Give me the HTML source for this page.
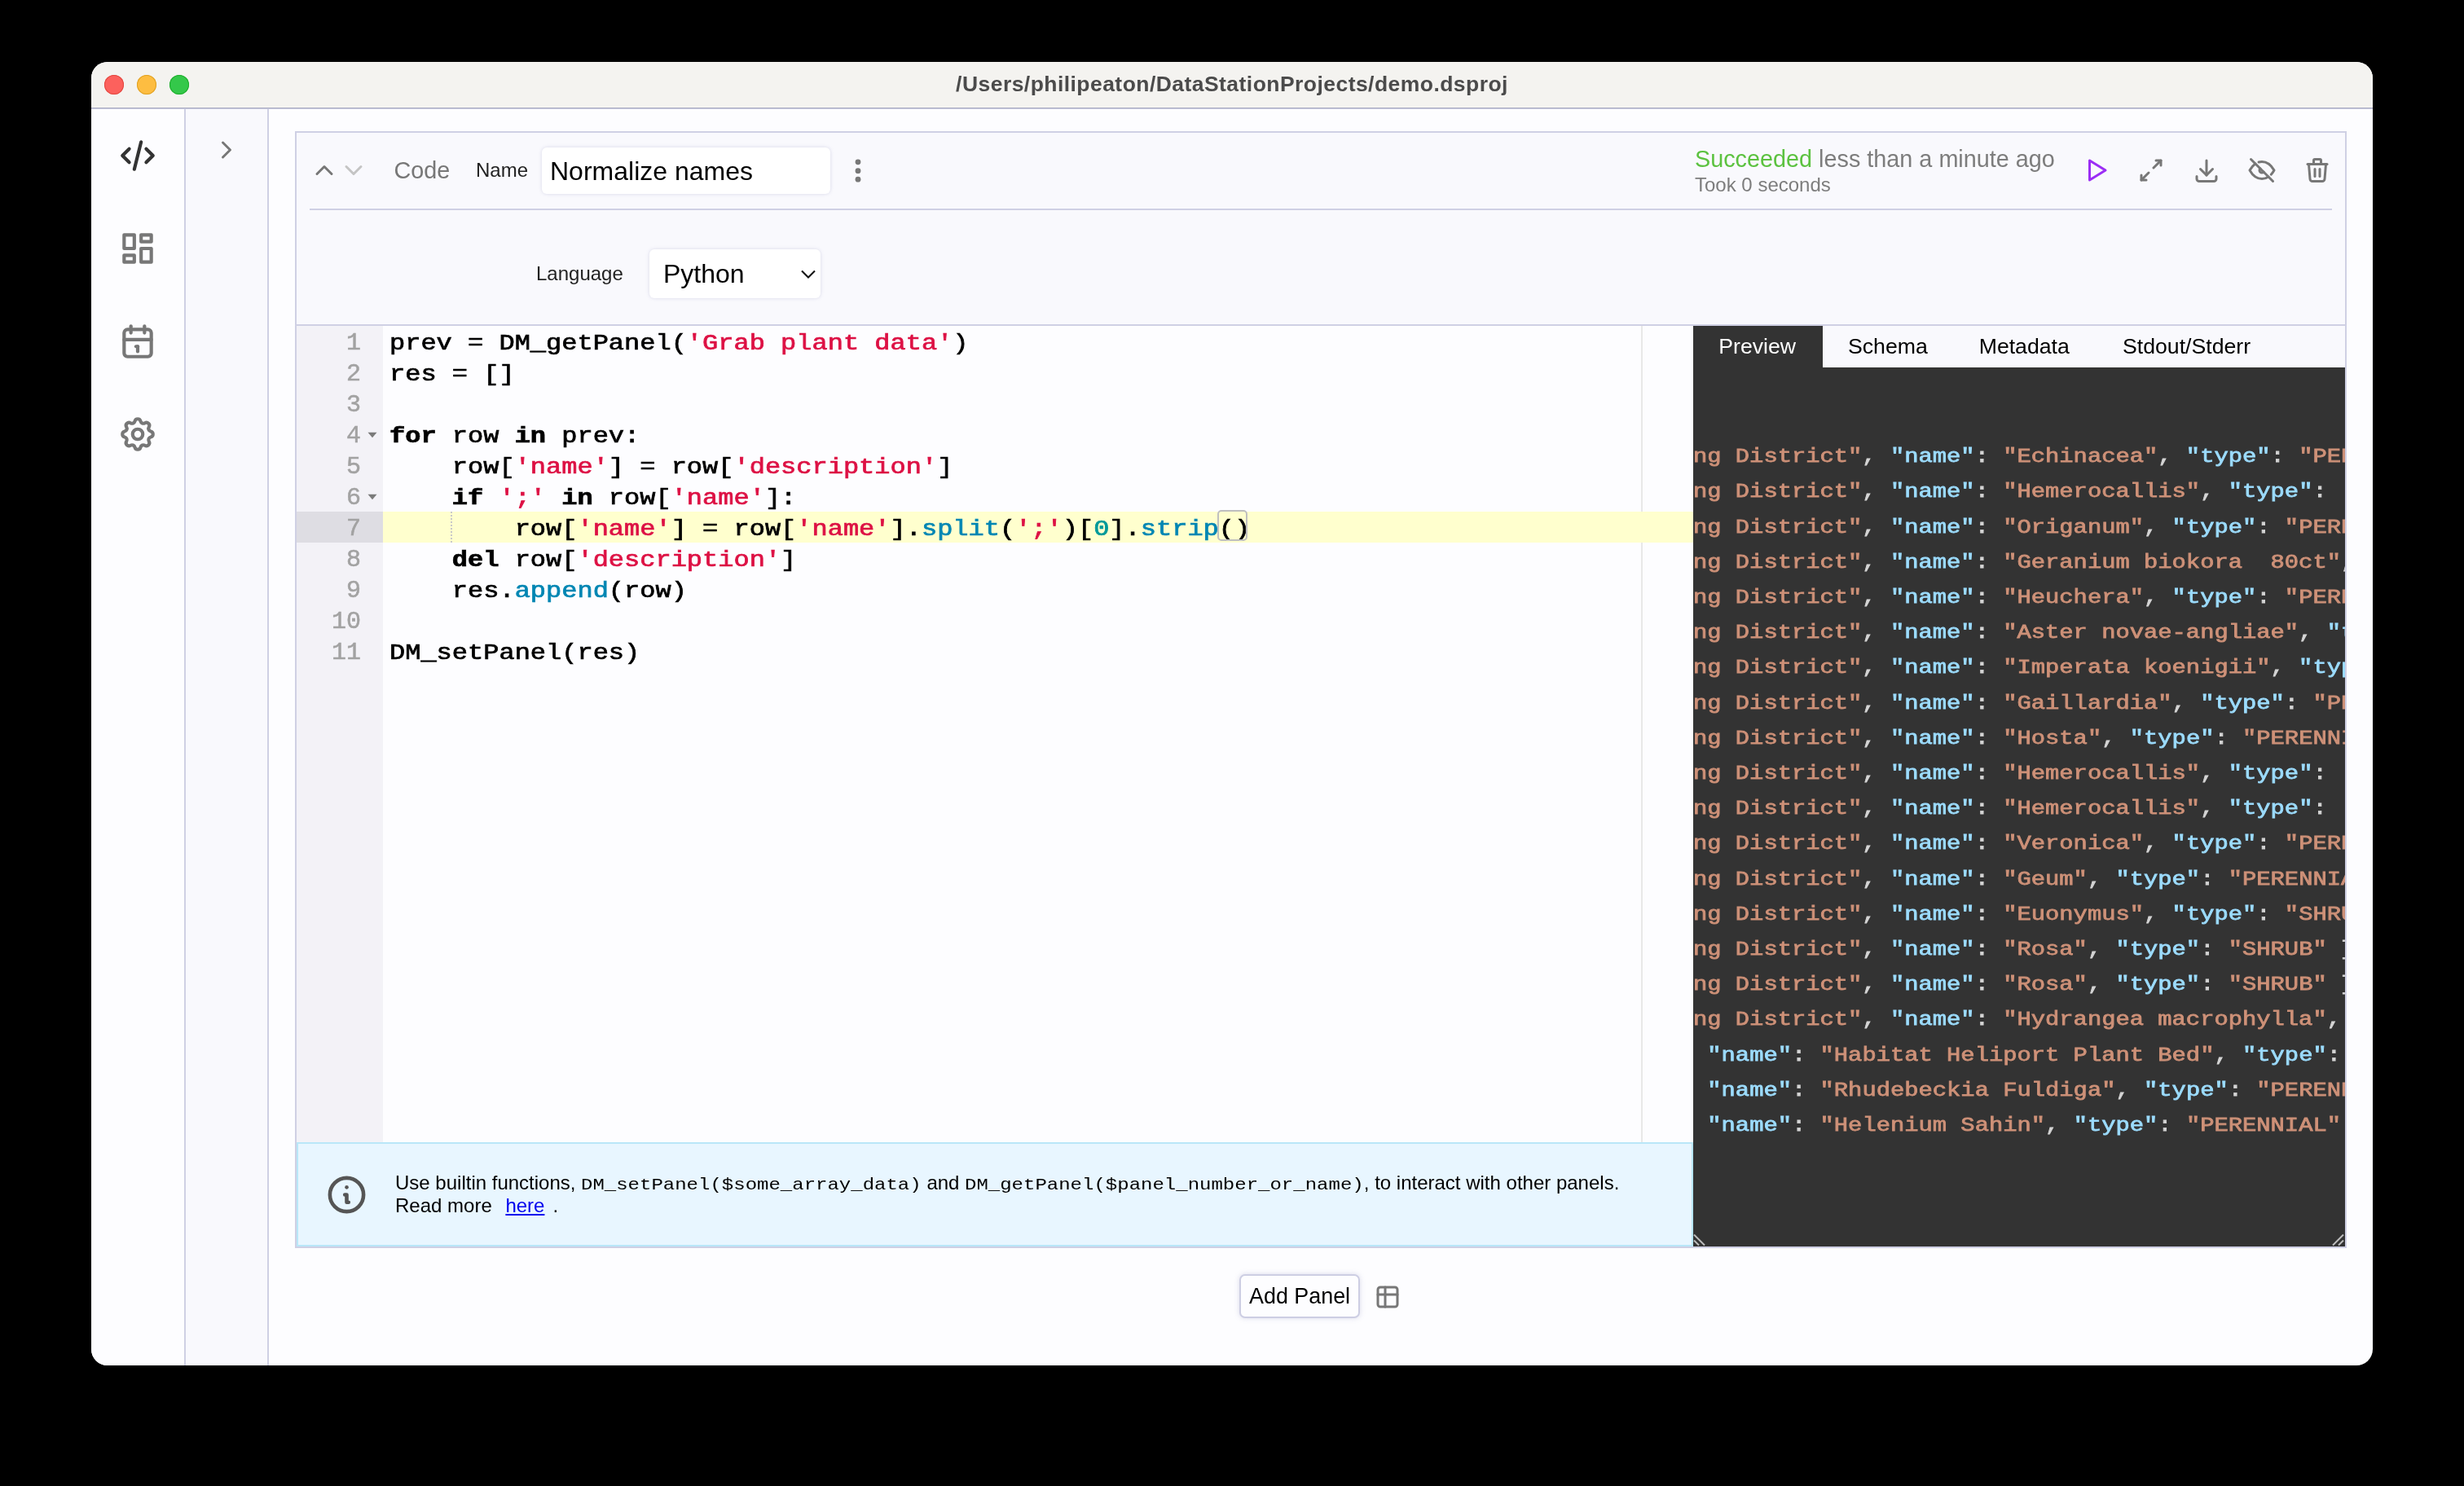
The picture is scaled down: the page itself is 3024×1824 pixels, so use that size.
<!DOCTYPE html>
<html>
<head>
<meta charset="utf-8">
<title>DataStation</title>
<style>
*{box-sizing:border-box;margin:0;padding:0}
html,body{width:3024px;height:1824px;background:#000;overflow:hidden}
body{position:relative;font-family:"Liberation Sans",sans-serif;color:#000}
.abs{position:absolute}
#win{will-change:transform;position:absolute;left:112px;top:76px;width:2800px;height:1600px;border-radius:20px;overflow:hidden;background:#fdfdff}
/* everything inside #page uses page coordinates */
#page{position:absolute;left:-112px;top:-76px;width:3024px;height:1824px}
#titlebar{left:112px;top:76px;width:2800px;height:56px;background:#f4f3f0}
#tb1{left:112px;top:131px;width:2800px;height:1px;background:#f8f7f3}
#tb2{left:112px;top:132px;width:2800px;height:1px;background:#a9abc1}
#tb3{left:112px;top:133px;width:2800px;height:1px;background:#c9cadf}
.tl{width:24px;height:24px;border-radius:50%;top:92px}
#title{left:112px;width:2800px;top:84.5px;height:36px;line-height:36px;text-align:center;font-weight:bold;font-size:26.5px;letter-spacing:0.45px;color:#4b4b4b}
#sidebar{left:112px;top:134px;width:114px;height:1542px;background:#fdfdff}
#sb-border{left:226px;top:134px;width:2px;height:1542px;background:#cfd0e4}
#col2{left:228px;top:134px;width:100px;height:1542px;background:#f9f9fd}
#col2-border{left:328px;top:134px;width:2px;height:1542px;background:#cfd0e4}
svg.ti{position:absolute;fill:none;stroke-width:2;stroke-linecap:round;stroke-linejoin:round}
#panel{left:362px;top:161px;width:2518px;height:1371px;border:2px solid #cfd0e4;background:#f9f9fd}
#hdrline{left:380px;top:256px;width:2482px;height:2px;background:#cfd0e4}
.sans{font-family:"Liberation Sans",sans-serif}
.mono{font-family:"Liberation Mono",monospace}

.ln{left:366px;width:77px;height:38px;line-height:38px;margin-top:2px;-webkit-text-stroke:0.5px;text-align:right;font-family:"Liberation Mono",monospace;font-size:30px;color:#a2a2a2}
.cl{left:478px;height:38px;line-height:38px;margin-top:3px;white-space:pre;font-family:"Liberation Mono",monospace;font-size:27px;transform:scaleX(1.18519);transform-origin:0 0;-webkit-text-stroke:0.7px;color:#000}
.cl .s{color:#dd1144}.cl .f{color:#0086b3}.cl .n{color:#009999}.cl b{font-weight:bold}
.tab{top:406.7px;height:36px;line-height:36px;font-size:26.67px;white-space:nowrap}
.pl{left:0;height:43.2px;line-height:43.2px;white-space:pre;font-family:"Liberation Mono",monospace;font-size:24.3px;transform:scaleX(1.18519);transform-origin:0 0;-webkit-text-stroke:0.8px;color:#d4d4d4}
.pl .ps{color:#ce9178}.pl .pk{color:#9cdcfe}
#infotxt code{font-family:"Liberation Mono",monospace;font-size:20.25px;line-height:20px;display:inline-block;transform:scaleX(1.18519);transform-origin:0 50%}
.lnk{color:#0000ee;text-decoration:underline;margin:0 10px 0 10px}
</style>
</head>
<body>
<div id="win"><div id="page">

<!-- TITLE BAR -->
<div id="titlebar" class="abs"></div>
<div id="tb1" class="abs"></div><div id="tb2" class="abs"></div><div id="tb3" class="abs"></div>
<div class="abs tl" style="left:128px;background:#fc615d;box-shadow:inset 0 0 0 1px #e2463f"></div>
<div class="abs tl" style="left:168px;background:#fdbd41;box-shadow:inset 0 0 0 1px #dfa123"></div>
<div class="abs tl" style="left:208px;background:#34c84a;box-shadow:inset 0 0 0 1px #1dad2b"></div>
<div id="title" class="abs">/Users/philipeaton/DataStationProjects/demo.dsproj</div>

<!-- SIDEBAR -->
<div id="sidebar" class="abs"></div>
<div id="sb-border" class="abs"></div>
<div id="col2" class="abs"></div>
<div id="col2-border" class="abs"></div>

<!-- PANEL -->
<div id="panel" class="abs"></div>
<div id="hdrline" class="abs"></div>

<!-- SIDEBAR ICONS -->
<svg class="ti" style="left:144px;top:166px;stroke:#333" width="50" height="50" viewBox="0 0 24 24"><path d="M7 8l-4 4l4 4"/><path d="M17 8l4 4l-4 4"/><path d="M14 4l-4 16"/></svg>
<svg class="ti" style="left:144px;top:280px;stroke:#777" width="50" height="50" viewBox="0 0 24 24"><path d="M4 4h6v8h-6z"/><path d="M4 16h6v4h-6z"/><path d="M14 12h6v8h-6z"/><path d="M14 4h6v4h-6z"/></svg>
<svg class="ti" style="left:144px;top:394px;stroke:#777" width="50" height="50" viewBox="0 0 24 24"><rect x="4" y="5" width="16" height="16" rx="2"/><path d="M16 3v4"/><path d="M8 3v4"/><path d="M4 11h16"/><path d="M11 15h1"/><path d="M12 15v3"/></svg>
<svg class="ti" style="left:144px;top:508px;stroke:#777" width="50" height="50" viewBox="0 0 24 24"><path d="M10.325 4.317c.426 -1.756 2.924 -1.756 3.35 0a1.724 1.724 0 0 0 2.573 1.066c1.543 -.94 3.31 .826 2.37 2.37a1.724 1.724 0 0 0 1.065 2.572c1.756 .426 1.756 2.924 0 3.35a1.724 1.724 0 0 0 -1.066 2.573c.94 1.543 -.826 3.31 -2.37 2.37a1.724 1.724 0 0 0 -2.572 1.065c-.426 1.756 -2.924 1.756 -3.35 0a1.724 1.724 0 0 0 -2.573 -1.066c-1.543 .94 -3.31 -.826 -2.37 -2.37a1.724 1.724 0 0 0 -1.065 -2.572c-1.756 -.426 -1.756 -2.924 0 -3.35a1.724 1.724 0 0 0 1.066 -2.573c-.94 -1.543 .826 -3.31 2.37 -2.37c1 .608 2.296 .07 2.572 -1.065z"/><circle cx="12" cy="12" r="3"/></svg>
<svg class="ti" style="left:260px;top:166px;stroke:#777" width="36" height="36" viewBox="0 0 24 24"><path d="M9 6l6 6l-6 6"/></svg>

<!-- PANEL HEADER LEFT -->
<svg class="ti" style="left:380px;top:191px;stroke:#777" width="36" height="36" viewBox="0 0 24 24"><path d="M6 15l6 -6l6 6"/></svg>
<svg class="ti" style="left:416px;top:191px;stroke:#c4c4c4" width="36" height="36" viewBox="0 0 24 24"><path d="M6 9l6 6l6 -6"/></svg>
<div class="abs" id="lblCode" style="left:483.5px;top:191px;height:36px;line-height:36px;font-size:28.8px;color:#777">Code</div>
<div class="abs" id="lblName" style="left:584px;top:191px;height:36px;line-height:36px;font-size:24px;color:#222">Name</div>
<div class="abs" id="inpName" style="left:665px;top:181px;width:354px;height:57px;background:#fff;border-radius:6px;box-shadow:0 0 4px rgba(120,120,170,.25)"></div>
<div class="abs" id="txtName" style="left:675px;top:191px;height:38px;line-height:38px;font-size:32px;color:#000">Normalize names</div>
<svg class="abs" style="left:1046px;top:192px" width="14" height="36" viewBox="0 0 14 36"><circle cx="7" cy="6.8" r="3.4" fill="#777"/><circle cx="7" cy="17.7" r="3.4" fill="#777"/><circle cx="7" cy="28.2" r="3.4" fill="#777"/></svg>

<!-- PANEL HEADER RIGHT -->
<div class="abs" id="status" style="left:2080px;top:177px;height:36px;line-height:36px;font-size:28.8px;color:#7d7d7d;white-space:nowrap"><span style="color:#5cc240">Succeeded</span> less than a minute ago</div>
<div class="abs" id="took" style="left:2080px;top:212.5px;height:28px;line-height:28px;font-size:24px;color:#7d7d7d;white-space:nowrap">Took 0 seconds</div>
<svg class="ti" style="left:2554px;top:191px;stroke:#9b2df5" width="36" height="36" viewBox="0 0 24 24"><path d="M7 4v16l13 -8z"/></svg>
<svg class="ti" style="left:2622px;top:191px;stroke:#777" width="36" height="36" viewBox="0 0 24 24"><path d="M16 4h4v4"/><path d="M14 10l6 -6"/><path d="M8 20h-4v-4"/><path d="M4 20l6 -6"/></svg>
<svg class="ti" style="left:2690px;top:191px;stroke:#777" width="36" height="36" viewBox="0 0 24 24"><path d="M4 17v2a2 2 0 0 0 2 2h12a2 2 0 0 0 2 -2v-2"/><path d="M7 11l5 5l5 -5"/><path d="M12 4v12"/></svg>
<svg class="ti" style="left:2758px;top:191px;stroke:#777" width="36" height="36" viewBox="0 0 24 24"><path d="M3 3l18 18"/><path d="M10.584 10.587a2 2 0 0 0 2.828 2.83"/><path d="M9.363 5.365a9.466 9.466 0 0 1 2.637 -.365c4 0 7.333 2.333 10 7c-.778 1.361 -1.612 2.524 -2.503 3.488m-2.14 1.861c-1.631 1.1 -3.415 1.651 -5.357 1.651c-4 0 -7.333 -2.333 -10 -7c1.369 -2.395 2.913 -4.175 4.632 -5.341"/></svg>
<svg class="ti" style="left:2826px;top:191px;stroke:#777" width="36" height="36" viewBox="0 0 24 24"><path d="M4 7h16"/><path d="M10 11v6"/><path d="M14 11v6"/><path d="M5 7l1 12a2 2 0 0 0 2 2h8a2 2 0 0 0 2 -2l1 -12"/><path d="M9 7v-3a1 1 0 0 1 1 -1h4a1 1 0 0 1 1 1v3"/></svg>

<!-- LANGUAGE ROW -->
<div class="abs" id="lblLang" style="left:658px;top:317.5px;height:36px;line-height:36px;font-size:24px;color:#222">Language</div>
<div class="abs" id="selLang" style="left:797px;top:306px;width:210px;height:60px;background:#fff;border-radius:6px;box-shadow:0 0 4px rgba(120,120,170,.25)"></div>
<div class="abs" id="txtLang" style="left:814px;top:317px;height:38px;line-height:38px;font-size:32px;color:#000">Python</div>
<svg class="abs" style="left:980px;top:326px;fill:none;stroke:#111;stroke-width:2.1;stroke-linecap:butt;stroke-linejoin:miter" width="24" height="20" viewBox="0 0 24 20"><path d="M4 6.5l8 8l8 -8"/></svg>
<!-- EDITOR -->
<div class="abs" id="edtop" style="left:364px;top:398px;width:2514px;height:2px;background:#cfd0e4"></div>
<div class="abs" id="edbg" style="left:470px;top:400px;width:1608px;height:1002px;background:#fdfdff"></div>
<div class="abs" id="gutter" style="left:364px;top:400px;width:106px;height:1002px;background:#f3f2f7"></div>
<div class="abs" id="actg" style="left:364px;top:628px;width:106px;height:38px;background:#dedde3"></div>
<div class="abs" id="actl" style="left:470px;top:628px;width:1608px;height:38px;background:#ffffce"></div>
<div class="abs" id="pmargin" style="left:2014px;top:400px;width:2px;height:1002px;background:#e8e8e8"></div>
<div class="abs" id="actl2" style="left:2014px;top:628px;width:64px;height:38px;background:#ffffce"></div>
<div class="abs ln" style="top:400px">1</div>
<div class="abs ln" style="top:438px">2</div>
<div class="abs ln" style="top:476px">3</div>
<div class="abs ln" style="top:514px">4</div>
<div class="abs ln" style="top:552px">5</div>
<div class="abs ln" style="top:590px">6</div>
<div class="abs ln" style="top:628px">7</div>
<div class="abs ln" style="top:666px">8</div>
<div class="abs ln" style="top:704px">9</div>
<div class="abs ln" style="top:742px">10</div>
<div class="abs ln" style="top:780px">11</div>
<svg class="abs" style="left:451px;top:530px" width="12" height="8" viewBox="0 0 12 8"><path d="M0.5 0.8h11l-5.5 6.4z" fill="#7a7a7a"/></svg>
<svg class="abs" style="left:451px;top:606px" width="12" height="8" viewBox="0 0 12 8"><path d="M0.5 0.8h11l-5.5 6.4z" fill="#7a7a7a"/></svg>
<div class="abs cl" style="top:400px">prev = DM_getPanel(<span class="s">&#x27;Grab plant data&#x27;</span>)</div>
<div class="abs cl" style="top:438px">res = []</div>
<div class="abs cl" style="top:476px"></div>
<div class="abs cl" style="top:514px"><b>for</b> row <b>in</b> prev:</div>
<div class="abs cl" style="top:552px">    row[<span class="s">&#x27;name&#x27;</span>] = row[<span class="s">&#x27;description&#x27;</span>]</div>
<div class="abs cl" style="top:590px">    <b>if</b> <span class="s">&#x27;;&#x27;</span> <b>in</b> row[<span class="s">&#x27;name&#x27;</span>]:</div>
<div class="abs cl" style="top:628px">        row[<span class="s">&#x27;name&#x27;</span>] = row[<span class="s">&#x27;name&#x27;</span>].<span class="f">split</span>(<span class="s">&#x27;;&#x27;</span>)[<span class="n">0</span>].<span class="f">strip</span>()</div>
<div class="abs cl" style="top:666px">    <b>del</b> row[<span class="s">&#x27;description&#x27;</span>]</div>
<div class="abs cl" style="top:704px">    res.<span class="f">append</span>(row)</div>
<div class="abs cl" style="top:742px"></div>
<div class="abs cl" style="top:780px">DM_setPanel(res)</div>
<div class="abs" style="left:553px;top:628px;width:2px;height:38px;background:repeating-linear-gradient(to bottom,#c9c9c9 0 2px,transparent 2px 4px)"></div>
<div class="abs" style="left:1494px;top:626px;width:37px;height:38px;border:2px solid #bfbfbf;border-radius:5px"></div>
<!-- PREVIEW -->
<div class="abs" id="tabsbg" style="left:2078px;top:400px;width:800px;height:51px;background:#f9f9fd"></div>
<div class="abs" id="pvbg" style="left:2078px;top:451px;width:800px;height:1079px;background:#333"></div>
<div class="abs" id="tabact" style="left:2078px;top:400px;width:159px;height:52px;background:#333"></div>
<div class="abs tab" style="left:2109.3px;color:#fff">Preview</div>
<div class="abs tab" style="left:2268px;color:#000">Schema</div>
<div class="abs tab" style="left:2428.7px;color:#000">Metadata</div>
<div class="abs tab" style="left:2605px;color:#000">Stdout/Stderr</div>
<div class="abs" id="pvclip" style="left:2078px;top:451px;width:800px;height:1079px;overflow:hidden">
<div class="abs pl" style="top:88.1px"><span class="ps">ng District&quot;</span>, <span class="pk">&quot;name&quot;</span>: <span class="ps">&quot;Echinacea&quot;</span>, <span class="pk">&quot;type&quot;</span>: <span class="ps">&quot;PERENNIAL&quot;</span></div>
<div class="abs pl" style="top:131.3px"><span class="ps">ng District&quot;</span>, <span class="pk">&quot;name&quot;</span>: <span class="ps">&quot;Hemerocallis&quot;</span>, <span class="pk">&quot;type&quot;</span>:   <span class="ps">&quot;PERENNIAL&quot;</span></div>
<div class="abs pl" style="top:174.5px"><span class="ps">ng District&quot;</span>, <span class="pk">&quot;name&quot;</span>: <span class="ps">&quot;Origanum&quot;</span>, <span class="pk">&quot;type&quot;</span>: <span class="ps">&quot;PERENNIAL&quot;</span></div>
<div class="abs pl" style="top:217.7px"><span class="ps">ng District&quot;</span>, <span class="pk">&quot;name&quot;</span>: <span class="ps">&quot;Geranium biokora  80ct&quot;</span>, <span class="pk">&quot;type&quot;</span>: <span class="ps">&quot;PERENNIAL&quot;</span></div>
<div class="abs pl" style="top:260.9px"><span class="ps">ng District&quot;</span>, <span class="pk">&quot;name&quot;</span>: <span class="ps">&quot;Heuchera&quot;</span>, <span class="pk">&quot;type&quot;</span>: <span class="ps">&quot;PERENNIAL&quot;</span></div>
<div class="abs pl" style="top:304.1px"><span class="ps">ng District&quot;</span>, <span class="pk">&quot;name&quot;</span>: <span class="ps">&quot;Aster novae-angliae&quot;</span>, <span class="pk">&quot;type&quot;</span>: <span class="ps">&quot;PERENNIAL&quot;</span></div>
<div class="abs pl" style="top:347.3px"><span class="ps">ng District&quot;</span>, <span class="pk">&quot;name&quot;</span>: <span class="ps">&quot;Imperata koenigii&quot;</span>, <span class="pk">&quot;type&quot;</span>: <span class="ps">&quot;PERENNIAL&quot;</span></div>
<div class="abs pl" style="top:390.5px"><span class="ps">ng District&quot;</span>, <span class="pk">&quot;name&quot;</span>: <span class="ps">&quot;Gaillardia&quot;</span>, <span class="pk">&quot;type&quot;</span>: <span class="ps">&quot;PERENNIAL&quot;</span></div>
<div class="abs pl" style="top:433.7px"><span class="ps">ng District&quot;</span>, <span class="pk">&quot;name&quot;</span>: <span class="ps">&quot;Hosta&quot;</span>, <span class="pk">&quot;type&quot;</span>: <span class="ps">&quot;PERENNIAL&quot;</span></div>
<div class="abs pl" style="top:476.9px"><span class="ps">ng District&quot;</span>, <span class="pk">&quot;name&quot;</span>: <span class="ps">&quot;Hemerocallis&quot;</span>, <span class="pk">&quot;type&quot;</span>:   <span class="ps">&quot;PERENNIAL&quot;</span></div>
<div class="abs pl" style="top:520.1px"><span class="ps">ng District&quot;</span>, <span class="pk">&quot;name&quot;</span>: <span class="ps">&quot;Hemerocallis&quot;</span>, <span class="pk">&quot;type&quot;</span>:   <span class="ps">&quot;PERENNIAL&quot;</span></div>
<div class="abs pl" style="top:563.3px"><span class="ps">ng District&quot;</span>, <span class="pk">&quot;name&quot;</span>: <span class="ps">&quot;Veronica&quot;</span>, <span class="pk">&quot;type&quot;</span>: <span class="ps">&quot;PERENNIAL&quot;</span></div>
<div class="abs pl" style="top:606.5px"><span class="ps">ng District&quot;</span>, <span class="pk">&quot;name&quot;</span>: <span class="ps">&quot;Geum&quot;</span>, <span class="pk">&quot;type&quot;</span>: <span class="ps">&quot;PERENNIAL&quot;</span></div>
<div class="abs pl" style="top:649.7px"><span class="ps">ng District&quot;</span>, <span class="pk">&quot;name&quot;</span>: <span class="ps">&quot;Euonymus&quot;</span>, <span class="pk">&quot;type&quot;</span>: <span class="ps">&quot;SHRUB&quot;</span></div>
<div class="abs pl" style="top:692.9px"><span class="ps">ng District&quot;</span>, <span class="pk">&quot;name&quot;</span>: <span class="ps">&quot;Rosa&quot;</span>, <span class="pk">&quot;type&quot;</span>: <span class="ps">&quot;SHRUB&quot;</span> },</div>
<div class="abs pl" style="top:736.1px"><span class="ps">ng District&quot;</span>, <span class="pk">&quot;name&quot;</span>: <span class="ps">&quot;Rosa&quot;</span>, <span class="pk">&quot;type&quot;</span>: <span class="ps">&quot;SHRUB&quot;</span> },</div>
<div class="abs pl" style="top:779.3px"><span class="ps">ng District&quot;</span>, <span class="pk">&quot;name&quot;</span>: <span class="ps">&quot;Hydrangea macrophylla&quot;</span>, <span class="pk">&quot;type&quot;</span>: <span class="ps">&quot;SHRUB&quot;</span></div>
<div class="abs pl" style="top:822.5px"> <span class="pk">&quot;name&quot;</span>: <span class="ps">&quot;Habitat Heliport Plant Bed&quot;</span>, <span class="pk">&quot;type&quot;</span>: <span class="ps">&quot;x&quot;</span></div>
<div class="abs pl" style="top:865.7px"> <span class="pk">&quot;name&quot;</span>: <span class="ps">&quot;Rhudebeckia Fuldiga&quot;</span>, <span class="pk">&quot;type&quot;</span>: <span class="ps">&quot;PERENNIAL&quot;</span></div>
<div class="abs pl" style="top:908.9px"> <span class="pk">&quot;name&quot;</span>: <span class="ps">&quot;Helenium Sahin&quot;</span>, <span class="pk">&quot;type&quot;</span>: <span class="ps">&quot;PERENNIAL&quot;</span></div>
</div>
<svg class="abs" style="left:2078px;top:1514px" width="16" height="16" viewBox="0 0 16 16"><path d="M1 1.5l13 13M1 8.5l6 6" stroke="#bdbdbd" stroke-width="2" fill="none"/></svg>
<svg class="abs" style="left:2862px;top:1514px" width="16" height="16" viewBox="0 0 16 16"><path d="M14 1.5l-13 13M14 8.5l-6 6" stroke="#bdbdbd" stroke-width="2" fill="none"/></svg>
<!-- INFO -->
<div class="abs" id="info" style="left:364px;top:1402px;width:1714px;height:128px;background:#e8f6ff;border:2px solid #b9e7f8"></div>
<svg class="ti" style="left:398px;top:1438.6px;stroke:#555" width="55" height="55" viewBox="0 0 24 24"><circle cx="12" cy="12" r="9"/><path d="M12 8h.01"/><path d="M11 12h1v4h1"/></svg>
<div class="abs" id="infotxt" style="left:485px;top:1438px;width:1560px;font-size:24px;line-height:28px;color:#000">Use builtin functions, <code style="margin-right:65.2px">DM_setPanel($some_array_data)</code> and <code style="margin-right:76.5px">DM_getPanel($panel_number_or_name)</code>, to interact with other panels.<br>Read more <span class="lnk">here</span>.</div>
<!-- ADD PANEL -->
<div class="abs" id="addbtn" style="left:1521px;top:1564px;width:148px;height:54px;border:2px solid #cdcee3;border-radius:7px;background:#fdfdff;box-shadow:0 0 6px rgba(130,130,180,.28)"></div>
<div class="abs" id="addtxt" style="left:1533px;top:1572px;height:38px;line-height:38px;font-size:26.9px;color:#000;white-space:nowrap">Add Panel</div>
<svg class="ti" style="left:1685px;top:1574px;stroke:#777" width="36" height="36" viewBox="0 0 24 24"><rect x="4" y="4" width="16" height="16" rx="2"/><path d="M4 10h16"/><path d="M10 4v16"/></svg>
<!--SECTIONS3-->


</div></div>
</body>
</html>
